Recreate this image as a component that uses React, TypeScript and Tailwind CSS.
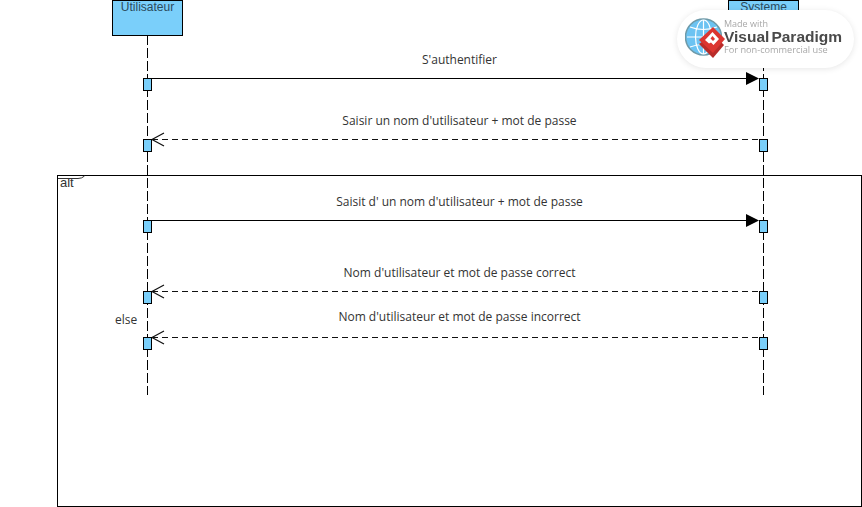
import React from 'react';

const LEFT_X = 147;
const RIGHT_X = 763;

interface Message {
  label: string;
  labelY: number;
  y: number;
  reply: boolean;
}

const messages: Message[] = [
  { label: "S'authentifier", labelY: 59, y: 78, reply: false },
  { label: "Saisir un nom d'utilisateur + mot de passe", labelY: 120, y: 139, reply: true },
  { label: "Saisit d' un nom d'utilisateur + mot de passe", labelY: 201, y: 220, reply: false },
  { label: "Nom d'utilisateur et mot de passe correct", labelY: 272, y: 291, reply: true },
  { label: "Nom d'utilisateur et mot de passe incorrect", labelY: 316, y: 337, reply: true },
];

function Arrows() {
  return (
    <svg className="absolute left-0 top-0" width={862} height={507}>
      <g stroke="#000" strokeWidth={1} shapeRendering="crispEdges">
        <line x1={LEFT_X + 0.5} y1={35} x2={LEFT_X + 0.5} y2={395} strokeDasharray="10 3" />
        <line x1={RIGHT_X + 0.5} y1={35} x2={RIGHT_X + 0.5} y2={395} strokeDasharray="10 3" />
      </g>
      {messages.map((m) =>
        m.reply ? (
          <g key={m.label} stroke="#111" fill="none">
            <line x1={152} y1={m.y + 0.5} x2={759} y2={m.y + 0.5} strokeDasharray="6 4" />
            <path d={`M164 ${m.y - 6} L152 ${m.y + 0.5} L164 ${m.y + 7}`} strokeWidth={1.2} />
          </g>
        ) : (
          <g key={m.label}>
            <line x1={152} y1={m.y + 0.5} x2={750} y2={m.y + 0.5} stroke="#000" />
            <path d={`M746 ${m.y - 6} L759 ${m.y + 0.5} L746 ${m.y + 7} Z`} fill="#000" />
          </g>
        ),
      )}
      <path d="M58 178.5 H78 Q82 178.5 84.5 176" fill="none" stroke="#333" />
    </svg>
  );
}

function Activation({ x, y }: { x: number; y: number }) {
  return (
    <div
      className="absolute h-[13px] w-[9px] border border-black bg-[#7acffa]"
      style={{ left: x - 4, top: y }}
    />
  );
}

function Actor({ name, x, w }: { name: string; x: number; w: number }) {
  return (
    <div
      className="absolute top-0 flex h-[36px] justify-center border border-black bg-[#7acffa] font-['Liberation_Sans',sans-serif] text-[12px] leading-[12px] text-[#2b4a5c]"
      style={{ left: x, width: w }}
    >
      {name}
    </div>
  );
}

function Logo() {
  return (
    <div className="absolute left-[677px] top-[10px] flex h-[58px] w-[177px] items-center rounded-[29px] bg-white pl-[8px] shadow-[0_1px_6px_rgba(0,0,0,0.1)]">
      <svg width={40} height={42} viewBox="0 0 40 42" className="shrink-0 blur-[0.3px]">
        <circle cx={18.5} cy={19} r={18} fill="#6cc3f2" stroke="#6f9aa8" strokeWidth={1.5} />
        <g fill="none" stroke="#fff" strokeWidth={1.2}>
          <ellipse cx={18.5} cy={19} rx={8} ry={17} />
          <line x1={18.5} y1={2} x2={18.5} y2={36} />
          <line x1={2} y1={19} x2={36} y2={19} />
          <path d="M5 9 Q18 14 32 9" />
          <path d="M5 29 Q18 24 32 29" />
        </g>
        <path d="M14 26 L28 40 L39 27 L28 16 Z" fill="#b92c2a" />
        <path d="M28 9 L40 21 L28 35 L14 22 Z" fill="#dc3530" />
        <path d="M27.5 14 L34 21 L28.5 27 L26 24.5 L24 25.5 L20 22 Z" fill="#fff" />
        <path d="M27.5 18 L30 21 L28 23 L25.5 20.5 Z" fill="#dc3530" />
      </svg>
      <div className="ml-[-1px] flex flex-col pb-[5px] font-['Open_Sans',sans-serif] blur-[0.3px]">
        <span className="text-[9px] leading-[13px] text-[#a8a8a8]">Made with</span>
        <span className="flex gap-[2px] font-['Liberation_Sans',sans-serif] text-[15.5px] font-bold leading-[13px] text-[#4a4a4a]">
          <span>Visual</span>
          <span>Paradigm</span>
        </span>
        <span className="text-[9.2px] leading-[13px] text-[#a8a8a8]">For non-commercial use</span>
      </div>
    </div>
  );
}

export default function App() {
  return (
    <div className="relative h-[507px] w-[862px] overflow-hidden bg-white font-['Open_Sans',sans-serif] text-[12px] text-[#333]">
      <Actor name="Utilisateur" x={112} w={71} />
      <Actor name="Systeme" x={728} w={71} />

      <div className="absolute left-[57px] top-[175px] h-[332px] w-[805px] border border-black pl-[2px] font-['Liberation_Sans',sans-serif] text-[13px] leading-[14px]">
        alt
      </div>

      <Arrows />

      {messages.map((m) => (
        <React.Fragment key={m.label}>
          <Activation x={LEFT_X} y={m.y} />
          <Activation x={RIGHT_X} y={m.y} />
          <div
            className="absolute left-[147px] w-[625px] text-center leading-[14px]"
            style={{ top: m.labelY - 6 }}
          >
            {m.label}
          </div>
        </React.Fragment>
      ))}

      <div className="absolute left-[115px] top-[313px] leading-[14px]">else</div>

      <Logo />
    </div>
  );
}
